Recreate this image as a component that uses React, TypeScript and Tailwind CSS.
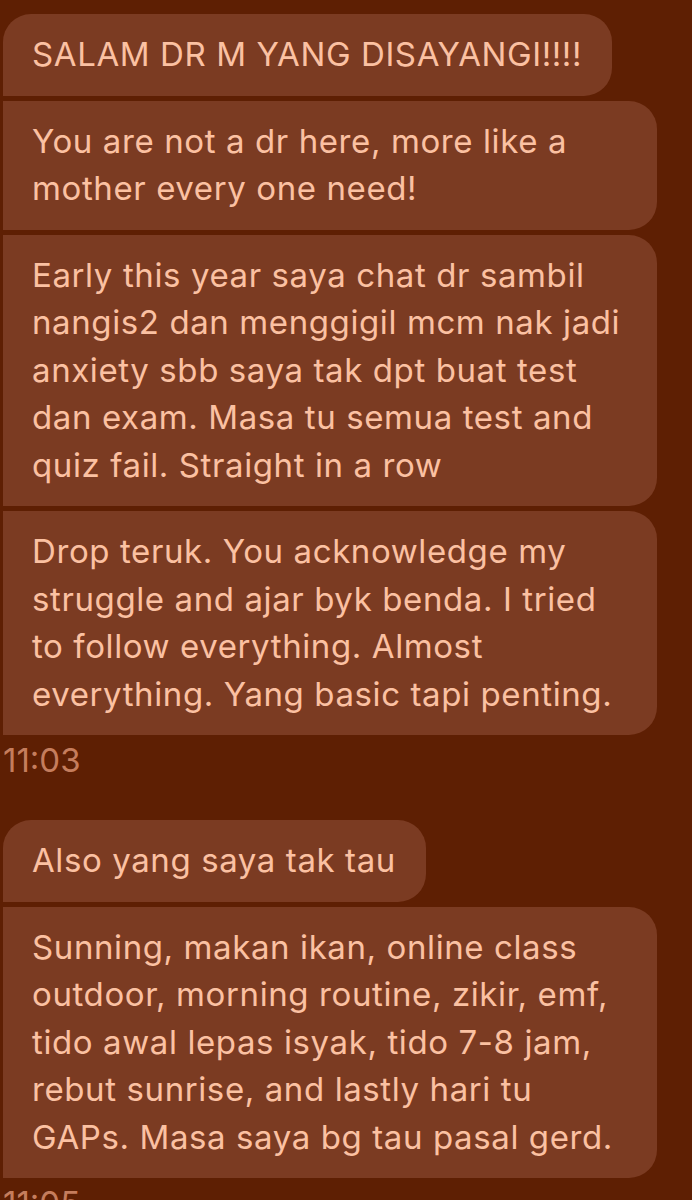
import React from "react";

type Msg = { lines: string[]; full?: boolean };

const groups: { msgs: Msg[]; time: string }[] = [
    {
        msgs: [
            { lines: ["SALAM DR M YANG DISAYANGI!!!!"] },
            { lines: ["You are not a dr here, more like a", "mother every one need!"], full: true },
            {
                lines: [
                    "Early this year saya chat dr sambil",
                    "nangis2 dan menggigil mcm nak jadi",
                    "anxiety sbb saya tak dpt buat test",
                    "dan exam. Masa tu semua test and",
                    "quiz fail. Straight in a row",
                ],
                full: true,
            },
            {
                lines: [
                    "Drop teruk. You acknowledge my",
                    "struggle and ajar byk benda. I tried",
                    "to follow everything. Almost",
                    "everything. Yang basic tapi penting.",
                ],
                full: true,
            },
        ],
        time: "11:03",
    },
    {
        msgs: [
            { lines: ["Also yang saya tak tau"] },
            {
                lines: [
                    "Sunning, makan ikan, online class",
                    "outdoor, morning routine, zikir, emf,",
                    "tido awal lepas isyak, tido 7-8 jam,",
                    "rebut sunrise, and lastly hari tu",
                    "GAPs. Masa saya bg tau pasal gerd.",
                ],
                full: true,
            },
        ],
        time: "11:05",
    },
];

const App = () => {
    return (
        <div className="h-[1200px] overflow-hidden bg-[#5e1f03] pl-[3px] pt-[14px] font-['Inter','Liberation_Sans',sans-serif]">
            {groups.map((g, gi) => (
                <div key={gi} className={gi > 0 ? "mt-[40px]" : ""}>
                    <div className="flex flex-col items-start gap-[5px]">
                        {g.msgs.map((m, i) => (
                            <div
                                key={i}
                                className={
                                    (i === 0 ? "rounded-[28px] rounded-bl-none " : "rounded-r-[28px] ") +
                                    (m.full ? "w-[654px] " : "w-fit ") +
                                    "bg-[#7b3b22] py-[17px] pl-[29px] pr-[30px] text-[33px] leading-[47.5px] tracking-[0.6px] text-[#fbc1a2]"
                                }
                            >
                                {m.lines.map((l, li) => (
                                    <div key={li} className="whitespace-nowrap">{l}</div>
                                ))}
                            </div>
                        ))}
                    </div>
                    <div className="mt-[5px] text-[33px] leading-[40px] text-[#c57d5d]">{g.time}</div>
                </div>
            ))}
        </div>
    );
};

export default App;
